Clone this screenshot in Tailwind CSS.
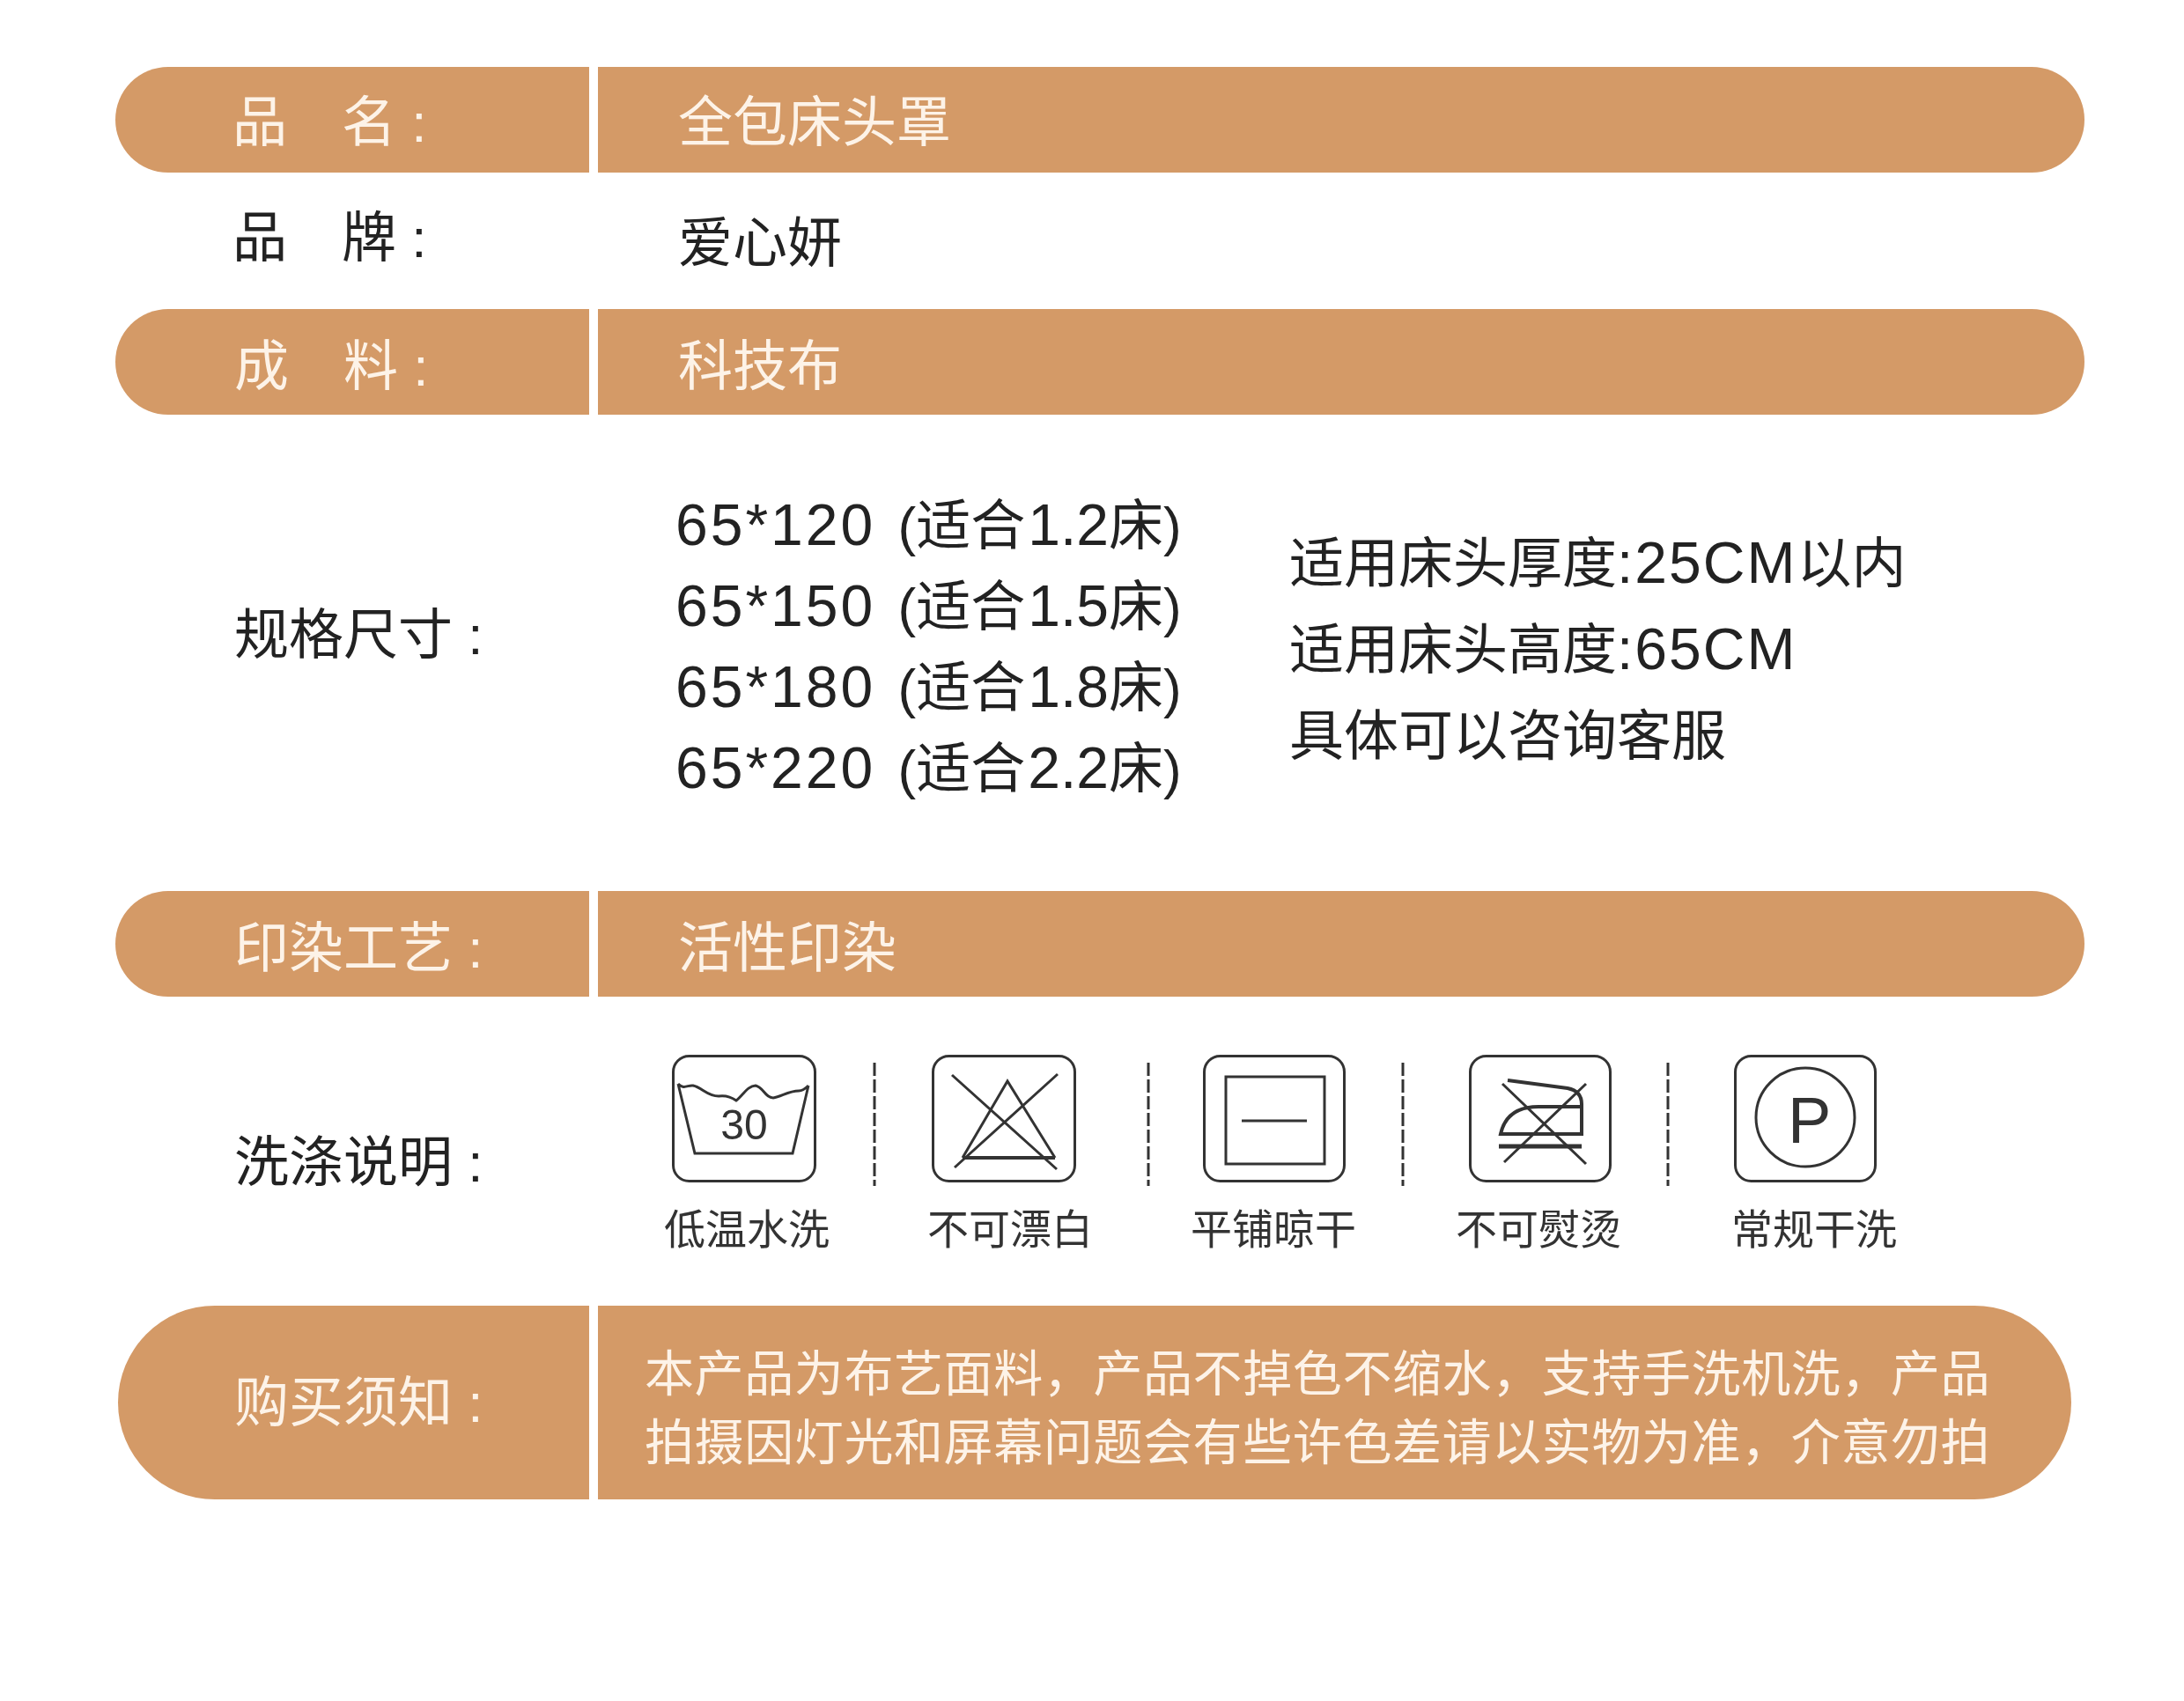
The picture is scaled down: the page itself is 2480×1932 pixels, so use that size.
<!DOCTYPE html>
<html lang="zh-CN">
  <head>
    <meta charset="UTF-8" />
    <title>全包床头罩</title>
    <script src="https://cdn.jsdelivr.net/npm/@tailwindcss/browser@4"></script>
  </head>
  <body class="bg-white text-[#222] font-['Liberation_Sans','Noto_Sans_CJK_SC',sans-serif]">
    <main class="w-[2480px] h-[1932px] pt-[76px] pl-[131px] pr-[113px] overflow-hidden blur-[0.6px]">
      <!-- 品名 -->
      <div class="flex h-[120px] text-[62px] text-[#fdf3e8]">
        <div class="w-[538px] rounded-l-[60px] bg-[#d49a67] pl-[133px] pt-[6px] flex items-center">品　名 :</div>
        <div class="ml-[10px] flex-1 rounded-r-[60px] bg-[#d49a67] pl-[91px] pt-[6px] flex items-center">全包床头罩</div>
      </div>
      <!-- 品牌 -->
      <div class="flex h-[155px] text-[62px]">
        <div class="w-[538px] pl-[133px] pt-[35px] leading-[80px]">品　牌 :</div>
        <div class="ml-[10px] pl-[91px] pt-[41px] leading-[80px]">爱心妍</div>
      </div>
      <!-- 成料 -->
      <div class="flex h-[120px] text-[62px] text-[#fdf3e8]">
        <div class="w-[538px] rounded-l-[60px] bg-[#d49a67] pl-[135px] pt-[10px] flex items-center">成　料 :</div>
        <div class="ml-[10px] flex-1 rounded-r-[60px] bg-[#d49a67] pl-[91px] pt-[10px] flex items-center">科技布</div>
      </div>
      <!-- 规格尺寸 -->
      <div class="flex h-[541px] text-[62px]">
        <div class="w-[538px] pl-[135px] pt-[211px] leading-[80px]">规格尺寸 :</div>
        <div class="ml-[10px] w-[785px] pl-[88px] pt-[81px] leading-[92px]">
          <p><span class="text-[66px] leading-none tracking-[3px]">65*120 </span><span class="ml-[4px]">(适合</span><span class="text-[66px] leading-none ml-[3px]">1.2</span>床)</p>
          <p><span class="text-[66px] leading-none tracking-[3px]">65*150 </span><span class="ml-[4px]">(适合</span><span class="text-[66px] leading-none ml-[3px]">1.5</span>床)</p>
          <p><span class="text-[66px] leading-none tracking-[3px]">65*180 </span><span class="ml-[4px]">(适合</span><span class="text-[66px] leading-none ml-[3px]">1.8</span>床)</p>
          <p><span class="text-[66px] leading-none tracking-[3px]">65*220 </span><span class="ml-[4px]">(适合</span><span class="text-[66px] leading-none ml-[3px]">2.2</span>床)</p>
        </div>
        <div class="pt-[121px] leading-[98px]">
          <p>适用床头厚度<span class="text-[66px] leading-none tracking-[2px]">:25CM</span>以内</p>
          <p>适用床头高度<span class="text-[66px] leading-none tracking-[2px]">:65CM</span></p>
          <p>具体可以咨询客服</p>
        </div>
      </div>
      <!-- 印染工艺 -->
      <div class="flex h-[120px] text-[62px] text-[#fdf3e8]">
        <div class="w-[538px] rounded-l-[60px] bg-[#d49a67] pl-[135px] pt-[10px] flex items-center">印染工艺 :</div>
        <div class="ml-[10px] flex-1 rounded-r-[60px] bg-[#d49a67] pl-[91px] pt-[10px] flex items-center">活性印染</div>
      </div>
      <!-- 洗涤说明 -->
      <div class="flex h-[351px]">
        <div class="w-[632px] pl-[135px] pt-[149px] text-[62px] leading-[80px]">洗涤说明 :</div>
        <div class="pt-[66px]">
          <div class="flex h-[148px] text-[#333]">
            <svg class="w-[164px] h-[146px]" viewBox="0 0 164 146" fill="none" stroke="currentColor" stroke-width="3">
              <rect x="1.5" y="1.5" width="161" height="142" rx="18" />
              <path d="M7 33 C14 40 18 34 24 35 C34 37 40 47 53 47 C60 46 66 47 73 52 C80 47 86 35 95 35 C104 37 106 49 115 49 C124 48 132 41 144 41 C148 41 152 38 155 35 M7 33 L26 112 H137 L155 35" />
              <text x="82" y="96" text-anchor="middle" font-size="48" fill="currentColor" stroke="none">30</text>
            </svg>
            <svg class="w-[6px] h-[140px] ml-[63px] mt-[9px]" viewBox="0 0 6 140" fill="none" stroke="currentColor" stroke-width="3" stroke-dasharray="15 4"><path d="M3 0 V140" /></svg>
            <svg class="w-[164px] h-[146px] ml-[62px]" viewBox="0 0 164 146" fill="none" stroke="currentColor" stroke-width="3">
              <rect x="1.5" y="1.5" width="161" height="142" rx="18" />
              <path d="M23 23 L142 130 M143 22 L26 128 M35 117 L86 30 L140 117" />
              <path d="M35 117 H140" stroke-width="4" />
            </svg>
            <svg class="w-[6px] h-[140px] ml-[79px] mt-[9px]" viewBox="0 0 6 140" fill="none" stroke="currentColor" stroke-width="3" stroke-dasharray="15 4"><path d="M3 0 V140" /></svg>
            <svg class="w-[164px] h-[146px] ml-[59px]" viewBox="0 0 164 146" fill="none" stroke="currentColor" stroke-width="3">
              <rect x="1.5" y="1.5" width="159" height="142" rx="18" />
              <rect x="26" y="25" width="112" height="99" />
              <path d="M44 75 H118" />
            </svg>
            <svg class="w-[6px] h-[140px] ml-[60px] mt-[9px]" viewBox="0 0 6 140" fill="none" stroke="currentColor" stroke-width="3" stroke-dasharray="15 4"><path d="M3 0 V140" /></svg>
            <svg class="w-[164px] h-[146px] ml-[72px]" viewBox="0 0 164 146" fill="none" stroke="currentColor" stroke-width="3">
              <rect x="1.5" y="1.5" width="159" height="142" rx="18" />
              <path d="M44 29 L112 38 C122 40 128 45 128 56 V90 H36 C40 72 52 59 79 59 H128" stroke-width="4" />
              <path d="M34 104 H128" stroke-width="5" />
              <path d="M38 33 L133 124 M133 33 L40 122" />
            </svg>
            <svg class="w-[6px] h-[140px] ml-[59px] mt-[9px]" viewBox="0 0 6 140" fill="none" stroke="currentColor" stroke-width="3" stroke-dasharray="15 4"><path d="M3 0 V140" /></svg>
            <svg class="w-[164px] h-[146px] ml-[72px]" viewBox="0 0 164 146" fill="none" stroke="currentColor" stroke-width="3">
              <rect x="1.5" y="1.5" width="159" height="142" rx="18" />
              <circle cx="81" cy="71" r="56" />
              <text x="61" y="100" font-size="74" fill="currentColor" stroke="none">P</text>
            </svg>
          </div>
          <div class="flex mt-[21px] -ml-[9px] text-[47px] leading-[60px] text-[#333]">
            <span>低温水洗</span>
            <span class="ml-[111px]">不可漂白</span>
            <span class="ml-[111px]">平铺晾干</span>
            <span class="ml-[113px]">不可熨烫</span>
            <span class="ml-[125px]">常规干洗</span>
          </div>
        </div>
      </div>
      <!-- 购买须知 -->
      <div class="flex h-[220px] ml-[3px] mr-[15px] text-[#fdf3e8]">
        <div class="w-[535px] rounded-l-[110px] bg-[#d49a67] pl-[132px] flex items-center text-[62px]">购买须知 :</div>
        <div class="ml-[10px] flex-1 rounded-r-[110px] bg-[#d49a67] pl-[53px] pt-[39px] text-[56px] leading-[78px] tracking-[0.6px]">
          <p>本产品为布艺面料，产品不掉色不缩水，支持手洗机洗，产品</p>
          <p>拍摄因灯光和屏幕问题会有些许色差请以实物为准，介意勿拍</p>
        </div>
      </div>
    </main>
  </body>
</html>
